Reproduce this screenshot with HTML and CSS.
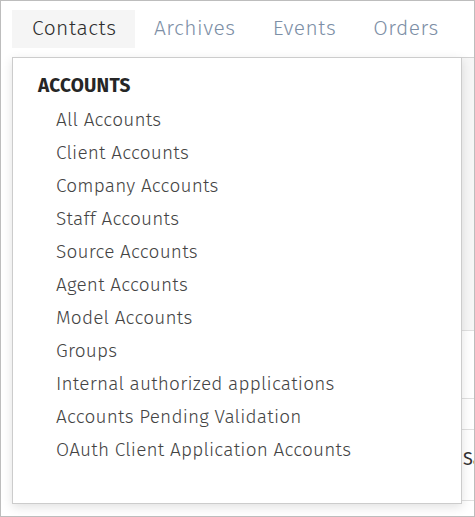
FILE: index.html
```html
<!DOCTYPE html>
<html>
<head>
<meta charset="utf-8">
<link rel="stylesheet" href="styles.css">
</head>
<body>
<div class="frame">
  <nav class="tabs">
    <div class="tab active">Contacts</div>
    <div class="tab">Archives</div>
    <div class="tab">Events</div>
    <div class="tab">Orders</div>
  </nav>
  <div class="content">
    <div class="bg-head"></div>
    <div class="bg-row r1"></div>
    <div class="bg-row r2"></div>
    <div class="bg-row r3"><span class="bg-text">Sample</span></div>
  </div>
  <div class="dropdown">
    <div class="section-title">ACCOUNTS</div>
    <ul class="menu">
      <li>All Accounts</li>
      <li>Client Accounts</li>
      <li>Company Accounts</li>
      <li>Staff Accounts</li>
      <li>Source Accounts</li>
      <li>Agent Accounts</li>
      <li>Model Accounts</li>
      <li>Groups</li>
      <li>Internal authorized applications</li>
      <li>Accounts Pending Validation</li>
      <li>OAuth Client Application Accounts</li>
    </ul>
  </div>
</div>
</body>
</html>
```
FILE: styles.css
```css
* { box-sizing: border-box; }
html, body { margin: 0; padding: 0; background: #fff; }
body { font-family: "Fira Sans", "Open Sans", "Noto Sans", sans-serif; }
.frame {
  position: relative;
  width: 475px;
  height: 517px;
  border: 1px solid #bdbdbd;
  overflow: hidden;
}
.tabs {
  display: flex;
  padding: 9px 0 0 11px;
  height: 56px;
}
.tab {
  height: 38px;
  padding: 0 18.5px;
  font-size: 21px;
  font-weight: 300;
  letter-spacing: 0.5px;
  line-height: 36px;
  color: #7d8fa6;
}
.tab.active {
  padding: 0 19px 0 20px;
  background: #f5f5f5;
  color: #2d2d2d;
}
.content {
  margin-left: 11px;
  border-top: 1px solid #d2d2d2;
  display: flex;
  flex-direction: column;
}
.bg-head { height: 273px; background: #f6f6f6; border-bottom: 1px solid #e0e0e0; }
.bg-row { border-bottom: 1px solid #e0e0e0; }
.r1 { height: 68px; }
.r2 { height: 31px; }
.r3 { height: 71px; padding-left: 451px; padding-top: 17px; }
.bg-text { font-size: 18px; line-height: 24px; color: #333; }
.dropdown {
  position: absolute;
  top: 56px;
  left: 11px;
  width: 450px;
  height: 447px;
  background: #fff;
  border: 1px solid #cccccc;
  box-shadow: 0 3px 10px rgba(0,0,0,0.12);
  padding: 13px 0 0 25px;
}
.section-title {
  font-size: 19px;
  font-weight: 700;
  letter-spacing: 0.2px;
  color: #262626;
  line-height: 30px;
}
.menu {
  list-style: none;
  margin: 2px 0 0 0;
  padding: 0 0 0 18px;
}
.menu li {
  font-size: 19px;
  font-weight: 300;
  letter-spacing: 0.2px;
  line-height: 33px;
  color: #444;
}
```
